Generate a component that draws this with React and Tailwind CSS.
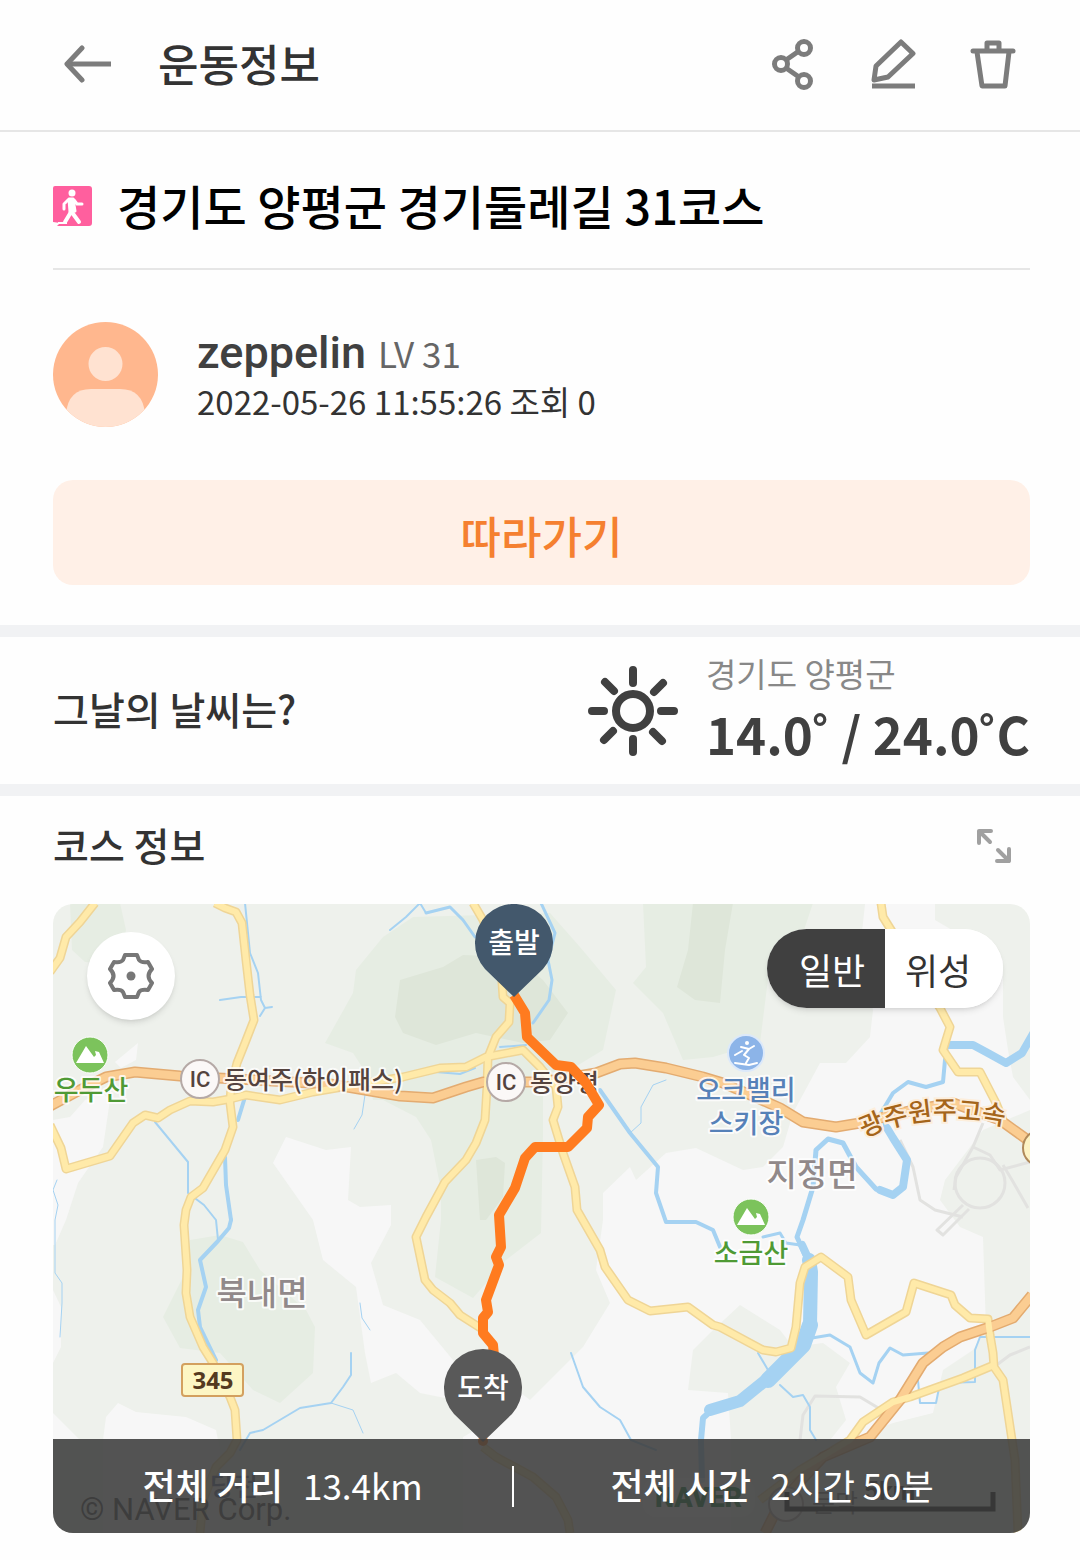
import { useState } from "react";
import clsx from "clsx";

const YELLOW_ROADS = [
  "M95 903L80 922L66 937L60 958L50 972",
  "M215 903L225 908L236 912L242 923L246 960L250 995L254 1020L245 1043L237 1063L231 1087L230 1103L233 1127L225 1150L203 1188L191 1197L186 1210L184 1225L187 1270L186 1293L190 1317L203 1347L213 1363L230 1397L235 1410L237 1440L230 1453L216 1467L203 1500L200 1533",
  "M50 1125L61 1148L66 1169L110 1156L133 1123L145 1115L158 1118L170 1110L190 1101L213 1102L230 1099L246 1095L280 1100L313 1092L360 1084L403 1077L440 1068L466 1067L486 1057L523 1050L540 1067L556 1087L558 1107L553 1120L563 1153L575 1187L577 1210L600 1250L605 1267L628 1300L650 1311L688 1307L713 1325L720 1327L763 1350L776 1352L791 1348L796 1327L800 1283L805 1267L821 1257L848 1277L851 1300L866 1335L906 1312L914 1283L951 1295L955 1305L970 1318L988 1319L990 1335L993 1353L994 1367L1003 1380L1012 1440L1015 1460L1018 1533",
  "M994 1365L963 1378L910 1397L893 1402L863 1422L850 1440L800 1470L760 1500",
  "M473 903L483 920L501 967L503 997L510 1003L509 1022L496 1037L488 1057L487 1087L485 1120L476 1143L466 1160L445 1182L426 1217L416 1237L425 1280L433 1290L450 1303L460 1315L482 1329",
  "M483 1447L496 1457L533 1477L556 1497L568 1520L570 1533",
  "M881 903L883 917L893 933L920 980L940 1008L950 1027L943 1050L958 1072L980 1072L996 1103L1003 1120",
];

const HIGHWAYS = [
  "M50 1106L80 1090L106 1077L135 1072L180 1076L330 1084L400 1096L433 1098L466 1087L483 1082L543 1082L596 1073L620 1064L635 1063L666 1068L703 1077L723 1083L780 1108L803 1122L836 1127L860 1123L913 1110L953 1103L1000 1120L1032 1143",
  "M1032 1295L1013 1318L990 1327L960 1337L943 1347L923 1363L900 1400L870 1437L823 1457L780 1503L765 1533",
];

const RIVERS = [
  { w: 8, d: "M1034 1032L1022 1053L1006 1063L986 1052L973 1045L950 1045" },
  { w: 4, d: "M947 1045L945 1060L943 1082L926 1087L908 1082L893 1093L881 1113" },
  { w: 8, d: "M887 1128L893 1138L907 1160L903 1187L893 1195L880 1190" },
  { w: 5, d: "M882 1115L886 1126M876 1189L856 1167L843 1143L828 1139L816 1150L813 1187L803 1220L797 1237L806 1257" },
  { w: 8, d: "M802 1245L808 1258" },
  { w: 14, d: "M809 1260L811 1272L810 1325" },
  { w: 16, d: "M810 1325L803 1345L768 1380" },
  { w: 12, d: "M766 1380L740 1401L710 1410" },
  { w: 6, d: "M713 1409L703 1418L701 1440L702 1480" },
  { w: 4, d: "M600 1090L630 1133L658 1167L656 1193L666 1222L696 1222L713 1230L720 1247" },
  { w: 3, d: "M426 913L450 907L463 920L475 937" },
  { w: 2, d: "M390 930L406 917L420 903L426 913" },
  { w: 3, d: "M541 903L555 933L548 960L552 980L549 1000L533 1023" },
  { w: 2, d: "M500 1047L526 1045M436 1072L460 1074L475 1068" },
  { w: 2, d: "M245 903L250 953L258 973L261 1000L265 1008L260 1016M265 1008L272 1007M220 1000L241 997L261 997" },
  { w: 4, d: "M245 1097L238 1120M225 1157L226 1185L231 1220" },
  { w: 4, d: "M231 1220L229 1228L218 1241L200 1260L206 1287L198 1310L200 1327L216 1360" },
  { w: 2, d: "M155 1122L188 1162L188 1193L204 1205L216 1220L218 1240" },
  { w: 2, d: "M240 1450L250 1433L263 1430L300 1408L331 1403L343 1387L351 1375L351 1353" },
  { w: 1, d: "M331 1403L353 1410L363 1433M360 1303L362 1318L370 1330M365 1095L362 1115L354 1129" },
  { w: 1, d: "M57 1180L53 1190L58 1205L55 1220L55 1273L62 1283L62 1303L60 1337" },
  { w: 2, d: "M571 1353L583 1387L600 1407L620 1420L631 1440L656 1450" },
  { w: 1, d: "M630 1133L641 1123L641 1107L653 1085L666 1080" },
  { w: 3, d: "M812 1338L830 1335L850 1347L860 1373L873 1383L879 1363L890 1348L903 1355L928 1353" },
  { w: 2, d: "M1032 1337L980 1337L975 1350L975 1382L940 1383L936 1403L920 1403L918 1380" },
  { w: 2, d: "M780 1385L793 1397L803 1395L810 1407L810 1430L816 1440M758 1353L768 1370" },
  { w: 3, d: "M763 1237L780 1233L786 1243L800 1245" },
];

const FIELDS = [
  "M53 1120L70 1117L85 1100L103 1093L110 1100L106 1127L103 1147L78 1183L66 1220L55 1245L53 1245Z",
  "M138 1043L136 1060L121 1068L115 1062Z",
  "M273 1163L286 1137L326 1150L351 1147L348 1200L360 1207L391 1205L391 1225L371 1263L383 1305L420 1320L453 1360L463 1387L445 1398L420 1393L396 1373L371 1383L365 1353L356 1287L323 1260L313 1220Z",
  "M103 1440L106 1417L118 1403L136 1412L186 1417L216 1430L220 1450L220 1533L103 1533Z",
  "M53 1363L61 1347L61 1307L53 1290ZM53 1413L80 1440L53 1440Z",
  "M865 904L935 904L935 920L1003 960L1003 1017L1008 1050L1013 1077L1030 1100L1030 1110L983 1130L945 1180L940 1200L960 1227L983 1237L986 1330L973 1350L943 1370L933 1413L893 1423L850 1440L830 1440L846 1420L836 1387L850 1363L823 1343L793 1347L780 1330L740 1305L710 1333L693 1350L688 1390L728 1393L731 1440L731 1533L463 1533L463 1437L506 1413L521 1393L530 1400L583 1347L610 1303L596 1270L603 1220L603 1193L630 1167L636 1180L666 1153L696 1148L743 1170L763 1167L783 1147L793 1113L820 1063L846 1063L870 1037L873 1010L860 950Z",
];

const FORESTS = [
  "M70 903L120 903L126 930L118 965L85 962L72 950Z",
  "M383 937L413 917L550 913L580 947L616 990L603 1050L570 1070L543 1073L543 1133L541 1233L506 1260L473 1298L435 1277L441 1220L441 1190L431 1140L416 1117L383 1100L373 1100L366 1073L353 1053L325 1043L353 993L356 970Z",
  "M643 903L813 903L803 933L770 963L760 1043L713 1057L683 1060L663 1013L633 983L646 967Z",
  "M190 1240L220 1235L243 1242L260 1270L306 1310L315 1327L313 1373L280 1403L253 1390L220 1353L180 1348L163 1317L183 1277Z",
];

const DEEP_FORESTS = [
  "M400 980L443 967L463 955L516 957L543 980L568 1013L550 1040L523 1043L476 1033L436 1045L403 1033L395 1017Z",
  "M476 1160L496 1157L505 1163L503 1197L486 1220L480 1220Z",
  "M693 903L733 903L725 950L720 1003L695 1000L677 987L688 950Z",
];

const LOCAL_ROADS =
  "M900 1140L913 1167L920 1200L935 1210L963 1217M983 1123L973 1147L956 1177L954 1190M973 1147L990 1155L1000 1170L1030 1162M1003 1165L1012 1180L1028 1208M800 1440L803 1415L815 1396L860 1397L885 1412M994 1367L1010 1355L1030 1347M963 1205L937 1230L943 1235L969 1209";

const ROUTE =
  "M514 995L525 1013L527 1037L556 1065L571 1067L586 1083L599 1105L588 1117L587 1128L568 1147L535 1147L525 1158L515 1188L499 1215L501 1247L496 1257L499 1265L486 1300L488 1312L483 1318L483 1333L493 1345L494 1356";

function BackIcon() {
  return (
    <svg viewBox="0 0 48 40" className="w-12 h-10" fill="none" stroke="#7c7c7c" strokeWidth="5">
      <path d="M47 19H5" />
      <path d="M18 3L3 19L18 35" strokeLinecap="round" strokeLinejoin="round" />
    </svg>
  );
}

function ShareIcon() {
  return (
    <svg viewBox="0 0 52 52" className="size-13" fill="none" stroke="#7c7c7c" strokeWidth="5">
      <circle cx="36" cy="9" r="6.5" />
      <circle cx="13" cy="25" r="6.5" />
      <circle cx="36" cy="42" r="6.5" />
      <path d="M18 21L31 12M18 29L31 38" />
    </svg>
  );
}

function EditIcon() {
  return (
    <svg viewBox="0 0 52 52" className="size-13" fill="none" stroke="#7c7c7c" strokeWidth="5">
      <path d="M33 3L45 14.500L20 38L6 41L8 27Z" strokeLinejoin="round" />
      <path d="M4 47H47" />
    </svg>
  );
}

function TrashIcon() {
  return (
    <svg viewBox="0 0 52 52" className="size-13" fill="none" stroke="#7c7c7c" strokeWidth="5" strokeLinejoin="round">
      <path d="M5 12H45" strokeLinecap="round" />
      <path d="M19 12V4H31V12" />
      <path d="M9 13L14 47H37L41 13" />
    </svg>
  );
}

function WalkIcon() {
  return (
    <svg viewBox="0 0 40 42" className="w-10 h-[42px] shrink-0">
      <path d="M2 1H36Q39 1 39 4V38Q39 41 36 41H4L7 38L0 37V3Q0 1 2 1Z" fill="#ff5f9e" />
      <circle cx="19" cy="8" r="3.500" fill="#fff" />
      <path
        d="M18 26L26 37M18 27L12 37"
        fill="none"
        stroke="#fff"
        strokeWidth="4"
        strokeLinecap="round"
        strokeLinejoin="round"
      />
      <path d="M16 14H20L22 26L17 27Z" fill="#fff" stroke="#fff" strokeWidth="3" strokeLinejoin="round" />
      <path d="M15 15L11 19L11 24M21 15L24 19L29 19" fill="none" stroke="#fff" strokeWidth="3" strokeLinecap="round" strokeLinejoin="round" />
      <path d="M5 38H14" stroke="#fff" strokeWidth="2" />
    </svg>
  );
}

function Avatar() {
  return (
    <svg viewBox="0 0 105 105" className="size-[105px] shrink-0" role="img" aria-label="zeppelin">
      <clipPath id="avatar">
        <circle cx="52.500" cy="52.500" r="52.500" />
      </clipPath>
      <g clipPath="url(#avatar)">
        <rect width="105" height="105" fill="#ffb78e" />
        <circle cx="52.500" cy="42" r="17" fill="#ffe2d1" />
        <path d="M13 105V92Q15 67 38 67H67Q90 67 92 92V105Z" fill="#ffe2d1" />
      </g>
    </svg>
  );
}

function SunIcon() {
  return (
    <svg viewBox="0 0 90 90" className="size-[90px]" fill="none" stroke="#404040" strokeWidth="8" strokeLinecap="round">
      <circle cx="45" cy="45" r="17" />
      <path d="M45 4V17M45 73V86M4 45H16M73 45H86M17 16L26 25M75 17L66 26M16 74L25 65M74 75L65 66" />
    </svg>
  );
}

function ExpandIcon() {
  return (
    <svg viewBox="0 0 36 36" className="size-9" fill="none" stroke="#a0a0a0" strokeWidth="4" strokeLinecap="round" strokeLinejoin="round">
      <path d="M15 3H3V15M3 3L14 14" />
      <path d="M21 33H33V21M33 33L22 22" />
    </svg>
  );
}

function GearIcon() {
  return (
    <svg viewBox="0 0 46 46" className="size-[46px]" fill="none" stroke="#777" strokeWidth="4" strokeLinejoin="round">
      <path d="M17 2H29L31 7Q33 10 40 9L44 16Q37 23 44 30L40 37Q33 36 31 39L29 44H17L15 39Q13 36 6 37L2 30Q9 23 2 16L6 9Q13 10 15 7Z" />
      <circle cx="23" cy="23" r="4.500" fill="#777" stroke="none" />
    </svg>
  );
}

function Junction({ x, y }) {
  return (
    <g>
      <circle cx={x} cy={y} r="19" fill="#fbf8f7" stroke="#b5a9a6" strokeWidth="2" />
      <text x={x} y={y + 8} textAnchor="middle" fontSize="22" fontWeight="500" fill="#54433e" className="font-['Roboto',sans-serif]">
        IC
      </text>
    </g>
  );
}

function Mountain({ x, y }) {
  return (
    <g transform={`translate(${x} ${y})`}>
      <circle r="18" fill="#7cc35c" stroke="#fff" strokeWidth="1" />
      <path d="M-14 8L-4 -9L4 2L6 0L5 -4L9 -3L14 8Z" fill="#fff" />
    </g>
  );
}

function Pin({ x, y, label, color }) {
  return (
    <g transform={`translate(${x} ${y})`}>
      <path d="M0 54L-29 26A39 39 0 1 1 29 26Z" fill={color} />
      <text y="10" textAnchor="middle" fontSize="28" fontWeight="500" fill="#fff">
        {label}
      </text>
    </g>
  );
}

function PlaceLabel({ x, y, size = 27, color, children, ...rest }) {
  return (
    <text x={x} y={y} fontSize={size} fontWeight="500" fill={color} stroke="#fff" strokeOpacity="0.8" strokeWidth="4" strokeLinejoin="round" paintOrder="stroke" {...rest}>
      {children}
    </text>
  );
}

function CourseMap({ satellite }) {
  return (
    <svg
      viewBox="53 904 977 629"
      preserveAspectRatio="xMidYMid slice"
      className={clsx("block w-full h-full font-['Noto_Sans_CJK_KR',sans-serif]", satellite && "saturate-200")}
    >
      <rect x="53" y="904" width="977" height="629" fill="#eef1ec" />
      {FIELDS.map((d) => (
        <path key={d} d={d} fill="#f7f7f7" />
      ))}
      {FORESTS.map((d) => (
        <path key={d} d={d} fill="#e6ede3" />
      ))}
      {DEEP_FORESTS.map((d) => (
        <path key={d} d={d} fill="#dee6d9" />
      ))}

      <g fill="none" strokeLinejoin="round">
        <path d={LOCAL_ROADS} stroke="#e2e2e0" strokeWidth="3" />
        <circle cx="980" cy="1183" r="25" stroke="#e2e2e0" strokeWidth="3" />
        {RIVERS.map((r) => (
          <path key={r.d} d={r.d} stroke="#a5d2f2" strokeWidth={r.w} strokeLinecap="round" />
        ))}
        {YELLOW_ROADS.map((d) => (
          <path key={d} d={d} stroke="#efd596" strokeWidth="9" />
        ))}
        {HIGHWAYS.map((d) => (
          <path key={d} d={d} stroke="#e3ab70" strokeWidth="11" />
        ))}
        {HIGHWAYS.map((d) => (
          <path key={d} d={d} stroke="#fbcd92" strokeWidth="8" />
        ))}
        {YELLOW_ROADS.map((d) => (
          <path key={d} d={d} stroke="#ffeaa9" strokeWidth="6" />
        ))}
      </g>

      <Junction x={200} y={1079} />
      <Junction x={506} y={1082} />
      <PlaceLabel x={224} y={1089} size={25} color="#54433e">동여주(하이패스)</PlaceLabel>
      <PlaceLabel x={530} y={1092} size={25} color="#54433e">동양평</PlaceLabel>

      <Mountain x={90} y={1055} />
      <PlaceLabel x={91} y={1100} color="#4f9a35" textAnchor="middle">우두산</PlaceLabel>
      <Mountain x={751} y={1217} />
      <PlaceLabel x={751} y={1263} color="#4f9a35" textAnchor="middle">소금산</PlaceLabel>

      <circle cx="746" cy="1053" r="18" fill="#8cb4e8" stroke="#dce9fa" strokeWidth="2" />
      <circle cx="747" cy="1043" r="2" fill="#fff" />
      <path
        d="M741 1047L749 1049L744 1055L749 1058L746 1063M735 1055L742 1051M749 1049L754 1046M735 1063L749 1065L757 1063"
        fill="none"
        stroke="#fff"
        strokeWidth="2"
        strokeLinecap="round"
        strokeLinejoin="round"
      />
      <PlaceLabel x={746} y={1100} color="#5681b8" textAnchor="middle">오크밸리</PlaceLabel>
      <PlaceLabel x={746} y={1133} color="#5681b8" textAnchor="middle">스키장</PlaceLabel>

      <PlaceLabel x={812} y={1186} size={33} color="#91898a" textAnchor="middle">지정면</PlaceLabel>
      <PlaceLabel x={262} y={1305} size={33} color="#91898a" textAnchor="middle">북내면</PlaceLabel>

      <path id="expressway" d="M864 1138Q925 1108 1010 1127" fill="none" />
      <text fontSize="26" fontWeight="500" fill="#a5651a" stroke="#fdeedb" strokeWidth="4" paintOrder="stroke">
        <textPath href="#expressway">광주원주고속</textPath>
      </text>
      <circle cx="1041" cy="1148" r="18" fill="#fdf3c4" stroke="#b08a5a" strokeWidth="2" />

      <rect x="182" y="1364" width="61" height="32" rx="3" fill="#fdf6c4" stroke="#d3a05f" strokeWidth="2" />
      <text x="213" y="1389" textAnchor="middle" fontSize="24" fontWeight="700" fill="#54391f" className="font-['Noto_Sans',sans-serif]">
        345
      </text>

      <text x="210" y="1496" fontSize="26" fontWeight="500" fill="#5c6b90">당전</text>
      <text x="80" y="1520" fontSize="31" fill="#444" className="font-['Roboto',sans-serif]">© NAVER Corp.</text>
      <rect x="643" y="1478" width="112" height="39" rx="14" fill="#fff" fillOpacity="0.5" />
      <text x="655" y="1507" fontSize="27" fontWeight="900" fill="#0b7a35" className="font-['Roboto',sans-serif]">NAVER</text>
      <circle cx="786" cy="1504" r="17" fill="#fbf8f7" stroke="#b5a9a6" strokeWidth="2" />
      <text x="812" y="1512" fontSize="25" fill="#777">문막</text>
      <text x="864" y="1500" fontSize="26" fontWeight="700" fill="#333" className="font-['Roboto',sans-serif]">5km</text>
      <path d="M787 1492V1509H993V1492" fill="none" stroke="#111" strokeWidth="5" />

      <path d={ROUTE} fill="none" stroke="#ff7b1f" strokeWidth="10" strokeLinejoin="round" />
      <circle cx="483" cy="1441" r="5" fill="#ff7b1f" />
      <Pin x={514} y={943} label="출발" color="#43586c" />
      <Pin x={483} y={1388} label="도착" color="#595959" />
    </svg>
  );
}

function Stat({ label, value }) {
  return (
    <p className="flex items-baseline gap-5 whitespace-nowrap">
      <span className="text-[36px] font-medium">{label}</span>
      <span className="text-[35px]">{value}</span>
    </p>
  );
}

export default function App() {
  const [mapType, setMapType] = useState("일반");

  return (
    <div className="min-h-screen bg-[#fefefe] text-[#333] font-['Noto_Sans_CJK_KR',sans-serif]">
      <header className="flex items-center h-[132px] pl-16 pr-[60px] border-b-2 border-[#e6e6e6]">
        <button aria-label="뒤로">
          <BackIcon />
        </button>
        <h1 className="ml-[46px] pb-1 text-[44px] leading-none font-medium">운동정보</h1>
        <div className="flex items-center gap-12 ml-auto">
          <button aria-label="공유"><ShareIcon /></button>
          <button aria-label="수정"><EditIcon /></button>
          <button aria-label="삭제"><TrashIcon /></button>
        </div>
      </header>

      <section className="pl-[53px] pr-[50px] pb-10">
        <div className="flex items-center gap-6 h-[138px] pt-3 border-b-2 border-[#e6e6e6]">
          <WalkIcon />
          <h2 className="pb-1 text-[47px] leading-none font-medium text-black">경기도 양평군 경기둘레길 31코스</h2>
        </div>

        <div className="flex items-center gap-[39px] mt-[52px]">
          <Avatar />
          <div className="pt-1">
            <p className="flex items-baseline gap-3 leading-[48px]">
              <span className="text-[45px] font-medium text-[#404040] font-['Roboto',sans-serif]">zeppelin</span>
              <span className="text-[35px] text-[#666]">LV 31</span>
            </p>
            <p className="text-[33px] leading-[48px]">2022-05-26 11:55:26 조회 0</p>
          </div>
        </div>

        <button className="w-full h-[105px] mt-[53px] pt-1 rounded-[20px] bg-[#fff0e7] text-[44px] leading-none font-medium text-[#f58030]">
          따라가기
        </button>
      </section>

      <section className="flex items-center justify-between h-[171px] pl-[53px] pr-[50px] border-y-[12px] border-[#f1f2f4]">
        <h3 className="pb-1 text-[39px] leading-none font-medium">그날의 날씨는?</h3>
        <div className="flex items-center gap-7">
          <SunIcon />
          <div className="pb-4">
            <p className="text-[33px] leading-[60px] text-[#888]">경기도 양평군</p>
            <p className="text-[51px] leading-[60px] font-bold text-[#404040]">14.0˚ / 24.0˚C</p>
          </div>
        </div>
      </section>

      <section className="pl-[53px] pr-[50px] pb-[27px]">
        <div className="flex items-center justify-between h-[108px] pr-[18px] pb-2">
          <h3 className="pb-1 text-[39px] leading-none font-medium">코스 정보</h3>
          <button aria-label="지도 확대"><ExpandIcon /></button>
        </div>

        <div className="relative aspect-[977/629] rounded-[20px] overflow-hidden">
          <CourseMap satellite={mapType === "위성"} />

          <button
            aria-label="지도 설정"
            className="absolute left-[34px] top-7 flex items-center justify-center size-[88px] rounded-full bg-white shadow-md"
          >
            <GearIcon />
          </button>

          <div className="absolute right-[27px] top-[25px] flex h-[79px] rounded-full overflow-hidden bg-white shadow-md">
            {["일반", "위성"].map((type) => (
              <button
                key={type}
                aria-pressed={mapType === type}
                onClick={() => setMapType(type)}
                className={clsx(
                  "w-[118px] text-[36px] leading-none first:pl-3 last:pr-3",
                  mapType === type ? "bg-[#404040] text-white" : "bg-white text-[#333]"
                )}
              >
                {type}
              </button>
            ))}
          </div>

          <div className="absolute inset-x-0 bottom-0 flex items-center h-[94px] bg-[#3c3c3c]/88 leading-none text-white">
            <div className="flex justify-center w-[47%] pb-1">
              <Stat label="전체 거리" value="13.4km" />
            </div>
            <div className="w-0.5 h-[41px] bg-white" />
            <div className="flex justify-center grow pb-1">
              <Stat label="전체 시간" value="2시간 50분" />
            </div>
          </div>
        </div>
      </section>
    </div>
  );
}
